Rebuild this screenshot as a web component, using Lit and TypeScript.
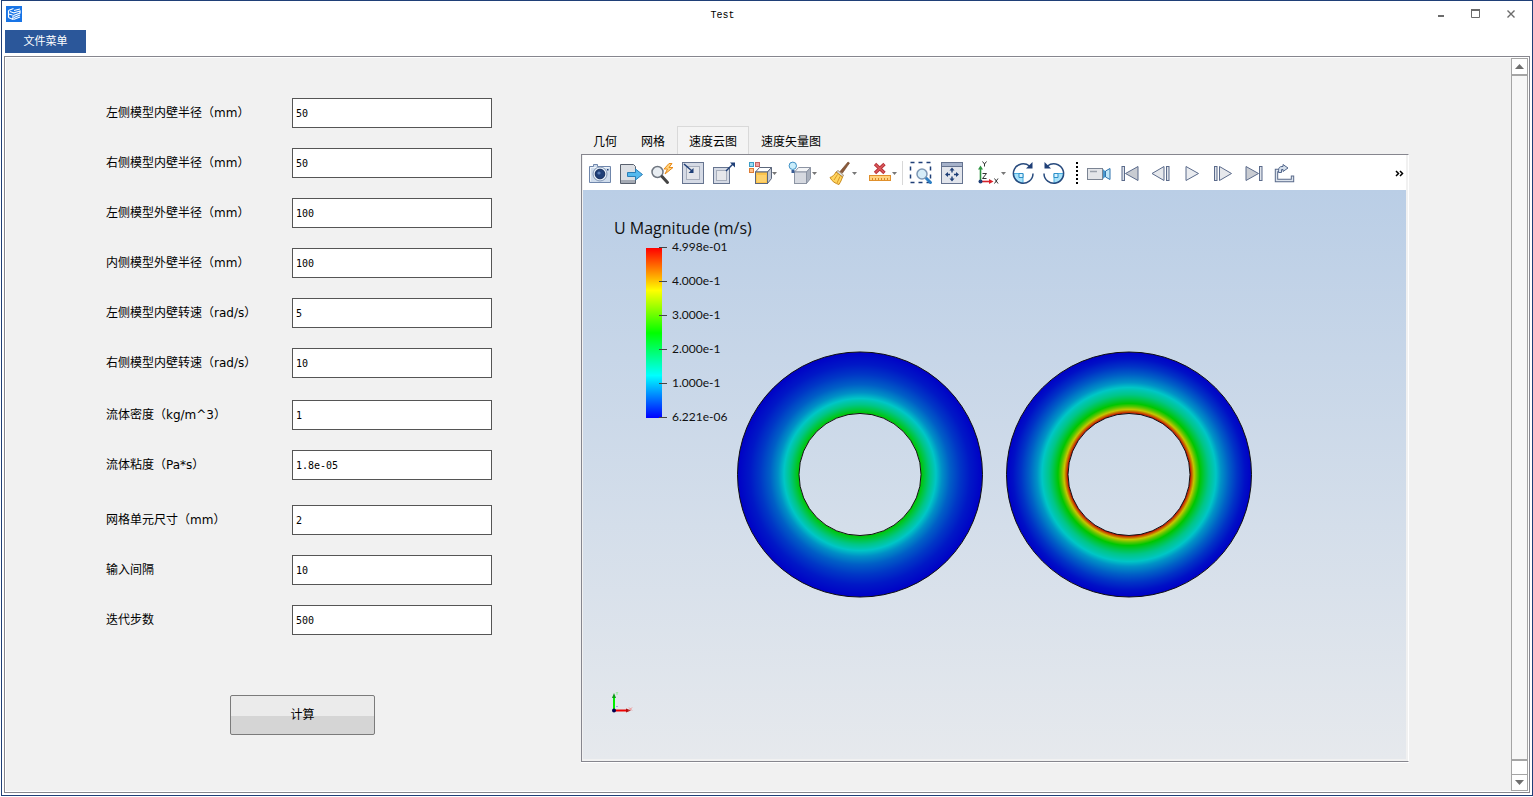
import { LitElement, html, svg, css, TemplateResult, SVGTemplateResult } from "lit";
import { customElement, state } from "lit/decorators.js";
import { classMap } from "lit/directives/class-map.js";

const NAVY = "#1f3f77";

const caret = (x: number) => svg`<path d="M${x} 11h5l-2.500 3z" fill="#777"/>`;

const cube = (front: string, top: string, side: string, line: string) => svg`
  <path d="M5.500 10.500l4-4.500h12l-4 4.500z" fill="${top}" stroke="${line}" stroke-linejoin="round"/>
  <path d="M17.500 10.500l4-4.500v11l-4 5z" fill="${side}" stroke="${line}" stroke-linejoin="round"/>
  <rect x="5.500" y="10.500" width="12" height="11.500" fill="${front}" stroke="${line}"/>`;

const rotateQuarter = svg`
  <path d="M12 12.500v9.500a10 10 0 0 1-9.500-9.500z" fill="#a8e2fa" stroke="#4aaee0"/>
  <path d="M12 12.500h-4v4h4z" fill="#d8f3ff" stroke="#2d8fc8"/>`;

const icons: Record<string, SVGTemplateResult> = {
  camera: svg`
    <path d="M1.500 5.500h4v-2h4v2h13v16h-21z" fill="#cfdcec" stroke="#6f86ab" stroke-linejoin="round"/>
    <path d="M2.500 20.500v-14h19" fill="none" stroke="#eef4fa"/>
    <circle cx="12" cy="13" r="7" fill="#e4edf6" stroke="#8397b5"/>
    <circle cx="12" cy="13" r="4.800" fill="${NAVY}" stroke="#142c5c"/>
    <circle cx="11" cy="12" r="1.600" fill="#5c7fb8"/>
    <rect x="19" y="8" width="1.500" height="1.500" fill="${NAVY}"/>`,
  exportData: svg`
    <path d="M1.500 3.500h13l2 2v17h-15z" fill="#dcdfe4" stroke="#59616e"/>
    <path d="M2 20.500h14" stroke="#a4aab4" stroke-width="3"/>
    <path d="M8.500 11.500h8v-3.500l7 5.500-7 5.500v-3.500h-8z" fill="#55b9ee" stroke="#2a7fb8" stroke-linejoin="round"/>`,
  zapZoom: svg`
    <circle cx="7.500" cy="11" r="5.500" fill="#e8edf2" stroke="#6f7680" stroke-width="1.500"/>
    <path d="M12 15.500l5.500 6" stroke="#444" stroke-width="3" stroke-linecap="round"/>
    <path d="M19 2.500l-5 5.500h3.500l-2.500 5 8-6.500h-4l3-4z" fill="#ffd27a" stroke="#e88a1a" stroke-linejoin="round"/>`,
  pointIn: svg`
    <rect x="1.500" y="1.500" width="21" height="21" fill="#d5dae5" stroke="#66748f"/>
    <rect x="5.500" y="5.500" width="13" height="13" fill="#e3e5ea" stroke="#a7aebc"/>
    <path d="M3 3l8 7" stroke="${NAVY}" stroke-width="1.500"/>
    <path d="M12.500 12v-5l-5 5z" fill="${NAVY}"/>`,
  pointOut: svg`
    <rect x="1.500" y="6.500" width="16" height="16" fill="#d5dae5" stroke="#66748f"/>
    <rect x="4.500" y="9.500" width="10" height="10" fill="#e6e7eb" stroke="#a7aebc"/>
    <path d="M14 10l7-7" stroke="${NAVY}" stroke-width="1.500"/>
    <path d="M23 1.500v5l-5-5z" fill="${NAVY}"/>`,
  blocks: svg`
    <rect x="1.500" y="1.500" width="4" height="4" fill="#9edcf2" stroke="#3b9cc6"/>
    <rect x="7.500" y="1.500" width="4" height="4" fill="#f0a2a2" stroke="#c66060"/>
    <rect x="1.500" y="7.500" width="4" height="4" fill="#ffc08a" stroke="#dd7c34"/>
    <g transform="translate(2 .500)">${cube("#fcc44c", "#fff", "#c3c9d4", "#5c677c")}</g>
    <rect x="9" y="14" width="9" height="7" fill="#ffdc86" opacity=".6"/>
    ${caret(24)}`,
  lightCube: svg`
    <g transform="translate(1 .500)">${cube("#d6d9e0", "#f3f4f6", "#a9b0bd", "#8c94a3")}</g>
    <circle cx="4.800" cy="4.800" r="3.700" fill="#c9edfb" stroke="#3d8fc4"/>
    <path d="M3.500 9h3v3h-3z" fill="#3a5d94"/>
    ${caret(24)}`,
  broom: svg`
    <path d="M20 1l1.500 1-7 10-2.500-1.500z" fill="#8a5a3a" stroke="#6b4026" stroke-width=".600"/>
    <path d="M10 9.500l5.500 4.500-1 2-6.500-5z" fill="#d8dbe0" stroke="#8e6b3a" stroke-width=".700"/>
    <path d="M8 11l6.500 5c-1 3-2 5-3.500 7.500-3.500-1-7-3-9-7 2.500-.800 4.500-2.500 6-5.500z" fill="#ffd45e" stroke="#c98b1e" stroke-linejoin="round"/>
    <path d="M9.500 13.500l-3.500 5.500M12 15.500l-3 6.500" stroke="#d99a28"/>
    ${caret(24)}`,
  ruler: svg`
    <path d="M7 3l9.500 9M16.500 3l-9.500 9" stroke="#b83238" stroke-width="3.400"/>
    <path d="M7.500 3.500l8.500 8M16 3.500l-8.500 8" stroke="#dc5b5e" stroke-width="1.400"/>
    <rect x="1.500" y="14.500" width="21" height="5" fill="#ffd27e" stroke="#e0902c"/>
    <path d="M4.500 17v2M7.500 17v2M10.500 17v2M13.500 17v2M16.500 17v2M19.500 17v2" stroke="#d98624"/>
    ${caret(24)}`,
  selectZoom: svg`
    <rect x="1.500" y="1.500" width="20" height="20" fill="none" stroke="${NAVY}" stroke-width="1.500" stroke-dasharray="4 4"/>
    <path d="M17 17l4.500 4.500" stroke="#2d7fc4" stroke-width="3" stroke-linecap="round"/>
    <circle cx="13" cy="13" r="5" fill="#d6edf8" stroke="#7d97b4" stroke-width="1.500"/>`,
  fit: svg`
    <rect x="1.500" y="1.500" width="21" height="21" fill="#e2e5ec" stroke="#65738f"/>
    <rect x="2" y="2" width="20" height="3" fill="#a6b2ca"/>
    <path d="M2 5.500h20" stroke="#65738f"/>
    <path d="M12 6.500l2.500 3h-5zM12 20.500l2.500-3h-5zM5 13.500l3-2.500v5zM19 13.500l-3-2.500v5z" fill="${NAVY}"/>
    <path d="M12 9v2.500M12 15.500v2.500M7.500 13.500h2.500M14 13.500h2.500" stroke="${NAVY}" stroke-width="1.400"/>`,
  axes: svg`
    <path d="M9.500 20.500v-13" stroke="#2d9440" stroke-width="1.600"/>
    <path d="M7 8.500l2.500-4 2.500 4z" fill="#2d9440"/>
    <path d="M10 20.500h9" stroke="#d8232c" stroke-width="1.600"/>
    <path d="M18 18l4.500 2.500-4.500 2.500z" fill="#d8232c"/>
    <circle cx="9.500" cy="20.500" r="2" fill="${NAVY}"/>
    <g fill="none" stroke="#333" stroke-width="1">
      <path d="M11.500.500l2 2.500 2-2.500M13.500 3v2.500"/>
      <path d="M11.500 12.500h4l-4 5h4"/>
      <path d="M23.500 17.500l3.500 5M27 17.500l-3.500 5"/>
    </g>
    ${caret(30)}`,
  rotateCw: svg`
    ${rotateQuarter}
    <path d="M18.500 5a9.800 9.800 0 1 0 3.500 7.500" fill="none" stroke="#274a7d" stroke-width="1.500"/>
    <path d="M15 7.500h6.500v-6.500z" fill="${NAVY}"/>`,
  rotateCcw: svg`
    <g transform="translate(24) scale(-1 1)">
      ${rotateQuarter}
      <path d="M18.500 5a9.800 9.800 0 1 0 3.500 7.500" fill="none" stroke="#274a7d" stroke-width="1.500"/>
      <path d="M15 7.500h6.500v-6.500z" fill="${NAVY}"/>
    </g>`,
  video: svg`
    <rect x=".500" y="7.500" width="15" height="11" fill="#e3e5e9" stroke="#7b8493"/>
    <path d="M3 10.500h7" stroke="#9aa1ac" stroke-width="1.500"/>
    <path d="M16 8l3 3v4l-3 3z" fill="#4796cc"/>
    <path d="M18.500 10l4.500-2.500v11l-4.500-2.500z" fill="#bfe6f8" stroke="#2f73ad"/>`,
  first: svg`
    <rect x="4" y="5.500" width="2.500" height="14" fill="#dfe3ea" stroke="#5b6b8b"/>
    <path d="M20 5.500v14l-12.500-7z" fill="#c9ccd2" stroke="#5b6b8b"/>`,
  previous: svg`
    <path d="M15 5.500v14l-12-7z" fill="#e6e8ec" stroke="#5b6b8b"/>
    <rect x="17.500" y="5.500" width="2.500" height="14" fill="#dfe3ea" stroke="#5b6b8b"/>`,
  play: svg`<path d="M6 5.500v14l12.500-7z" fill="#e9ebef" stroke="#5b6b8b"/>`,
  next: svg`
    <rect x="3.500" y="5.500" width="2.500" height="14" fill="#dfe3ea" stroke="#5b6b8b"/>
    <path d="M8.500 5.500v14l12-7z" fill="#e6e8ec" stroke="#5b6b8b"/>`,
  last: svg`
    <path d="M4 5.500v14l12.500-7z" fill="#c9ccd2" stroke="#5b6b8b"/>
    <rect x="17.500" y="5.500" width="2.500" height="14" fill="#dfe3ea" stroke="#5b6b8b"/>`,
  loop: svg`
    <path d="M5.500 9.500h-2v10h16v-5" fill="none" stroke="#5b6b8b" stroke-width="3.400"/>
    <path d="M5.500 9.500h-2v10h16v-4" fill="none" stroke="#dce3ec" stroke-width="1.400"/>
    <path d="M5.500 11.500v-2c0-2.500 1-4 3.500-4h1v-2l5 3.500-5 3.500v-2h-1.500v3z" fill="#d5dfeb" stroke="#53678c" stroke-linejoin="round"/>`,
};

type Tool = { icon: string; label: string; drop?: boolean; apart?: boolean } | "line" | "dots";

const tools: Tool[] = [
  { icon: "camera", label: "截图" },
  { icon: "exportData", label: "导出" },
  { icon: "zapZoom", label: "快速缩放" },
  { icon: "pointIn", label: "缩小到框" },
  { icon: "pointOut", label: "放大到框" },
  { icon: "blocks", label: "显示方式", drop: true, apart: true },
  { icon: "lightCube", label: "光照", drop: true },
  { icon: "broom", label: "清除", drop: true },
  { icon: "ruler", label: "测量", drop: true },
  "line",
  { icon: "selectZoom", label: "框选缩放" },
  { icon: "fit", label: "适应窗口" },
  { icon: "axes", label: "视图方向", drop: true },
  { icon: "rotateCw", label: "顺时针旋转" },
  { icon: "rotateCcw", label: "逆时针旋转" },
  "dots",
  { icon: "video", label: "录制" },
  { icon: "first", label: "第一帧" },
  { icon: "previous", label: "上一帧" },
  { icon: "play", label: "播放" },
  { icon: "next", label: "下一帧" },
  { icon: "last", label: "最后一帧" },
  { icon: "loop", label: "循环" },
];

/* Speed profiles: [radius, fraction of the colour scale]. */
const RADIUS = 122.5;
const HOLE = 61;
type Profile = [number, number][];
const slow: Profile = [[61, 0.5], [65, 0.42], [70, 0.33], [76, 0.25], [82, 0.18], [90, 0.12], [100, 0.07], [110, 0.03], [122.5, 0]];
const fast: Profile = [[61, 1], [63, 0.87], [65, 0.75], [68, 0.61], [71, 0.5], [76, 0.4], [80, 0.33], [87, 0.25], [92, 0.185], [100, 0.12], [108, 0.065], [116, 0.02], [122.5, 0]];

const rainbow = (v: number, level: number) => {
  const f = v * 4;
  const c =
    f < 1 ? [0, f, 1] : f < 2 ? [0, 1, 2 - f] : f < 3 ? [f - 2, 1, 0] : [1, 4 - f, 0];
  return `rgb(${c.map((n) => Math.round(n * level)).join(",")})`;
};

@customElement("flow-view")
export class FlowView extends LitElement {
  static styles = css`
    :host {
      display: block;
      min-height: 0;
      background: linear-gradient(#bacee6, #e6e9ed);
    }
    .scene {
      display: block;
      width: 100%;
      height: 100%;
    }
    .text {
      font-family: Lato, "Open Sans", sans-serif;
      font-size: 12px;
      fill: #111;
    }
    .heading {
      font-family: "Open Sans", sans-serif;
      font-size: 16px;
    }
  `;

  private gradient(id: string, profile: Profile) {
    return svg`<radialGradient id="${id}">
      ${profile.map(([r, v]) => svg`<stop offset="${r / RADIUS}" stop-color="${rainbow(v, 198)}"/>`)}
    </radialGradient>`;
  }

  private ring(cx: number, cy: number, fill: string) {
    const circle = (r: number) =>
      `M${cx - r} ${cy}a${r} ${r} 0 1 0 ${r * 2} 0a${r} ${r} 0 1 0 ${-r * 2} 0z`;
    return svg`<path d="${circle(RADIUS) + circle(HOLE)}" fill="url(#${fill})" fill-rule="evenodd" stroke="#111"/>`;
  }

  render() {
    const ticks = ["4.998e-01", "4.000e-1", "3.000e-1", "2.000e-1", "1.000e-1", "6.221e-06"];
    return html`
      <svg class="scene" viewBox="0 0 823 569" role="img" aria-label="U Magnitude (m/s)">
        <defs>
          ${this.gradient("slow", slow)} ${this.gradient("fast", fast)}
          <linearGradient id="bar" x1="0" y1="0" x2="0" y2="1">
            ${[1, 0.75, 0.5, 0.25, 0].map(
              (v) => svg`<stop offset="${1 - v}" stop-color="${rainbow(v, 255)}"/>`
            )}
          </linearGradient>
        </defs>
        <text class="text heading" x="31" y="44">U Magnitude (m/s)</text>
        <rect x="63" y="58" width="16" height="170" fill="url(#bar)" />
        ${ticks.map(
          (t, i) => svg`
            <path d="M76 ${57.5 + i * 34}h8" stroke="#444"/>
            <text class="text" x="89" y="${61 + i * 34}">${t}</text>`
        )}
        ${this.ring(277, 284.5, "slow")} ${this.ring(546, 284.5, "fast")}
        <path d="M31 520v-13" stroke="#00f000" stroke-width="2" />
        <path d="M29 508l2-5 2 5z" fill="#0b9e14" />
        <path d="M33 502l1 1.500 1-1.500M34 503.500v1.500" fill="none" stroke="#9be8a0" />
        <path d="M32 520.500h12" stroke="#f00000" stroke-width="2" />
        <path d="M43 518.500l5 2-5 2z" fill="#b01010" />
        <path d="M46 517.500l3 3M49 517.500l-3 3" stroke="#f09090" />
        <path d="M33 516.500h2" stroke="#a0a0f0" />
        <circle cx="31" cy="520.500" r="2" fill="#000050" />
      </svg>
    `;
  }
}

interface Field {
  label: string;
  value: string;
}

const groups: Field[][] = [
  [
    { label: "左侧模型内壁半径（mm）", value: "50" },
    { label: "右侧模型内壁半径（mm）", value: "50" },
    { label: "左侧模型外壁半径（mm）", value: "100" },
    { label: "内侧模型外壁半径（mm）", value: "100" },
    { label: "左侧模型内壁转速（rad/s）", value: "5" },
    { label: "右侧模型内壁转速（rad/s）", value: "10" },
  ],
  [
    { label: "流体密度（kg/m^3）", value: "1" },
    { label: "流体粘度（Pa*s）", value: "1.8e-05" },
  ],
  [
    { label: "网格单元尺寸（mm）", value: "2" },
    { label: "输入间隔", value: "10" },
    { label: "迭代步数", value: "500" },
  ],
];

@customElement("app-root")
export class AppRoot extends LitElement {
  static styles = css`
    :host {
      display: block;
      box-sizing: border-box;
      height: 100vh;
      padding: 0 0 1px 1px;
      background: #fff;
      color: #000;
      font: 12px/16px "DejaVu Sans", "Noto Sans CJK SC", sans-serif;
    }
    * {
      box-sizing: border-box;
    }
    button {
      font: inherit;
      color: inherit;
      margin: 0;
      padding: 0;
      border: 0;
      background: none;
    }
    svg {
      display: block;
      overflow: visible;
    }
    .window {
      display: flex;
      flex-direction: column;
      height: 100%;
      border: 1px solid #1f3f77;
      background: #fff;
    }
    .titlebar {
      display: flex;
      align-items: center;
      height: 26px;
      padding: 0 4px;
    }
    .title {
      flex: 1;
      margin: 0;
      padding-top: 4px;
      text-align: center;
      font: 10px/16px "Liberation Mono", monospace;
    }
    .control {
      display: grid;
      place-items: center;
      width: 35px;
      height: 26px;
    }
    .menubar {
      display: flex;
      padding: 3px;
    }
    .menu {
      width: 81px;
      height: 23px;
      background: #2b579a;
      color: #fff;
      font-size: 11px;
    }
    .frame {
      flex: 1;
      display: flex;
      min-height: 0;
      margin: 0 2px 2px;
      padding: 1px;
      border: 1px solid #86868e;
      background: #fff;
    }
    .content {
      flex: 1;
      display: flex;
      min-width: 0;
      padding-left: 100px;
      background: #f1f1f1;
    }
    .form {
      flex: none;
      display: flex;
      flex-direction: column;
      padding-top: 40px;
    }
    .group {
      display: grid;
      gap: 20px;
    }
    .group + .group {
      margin-top: 22px;
    }
    .group + .group + .group {
      margin-top: 25px;
    }
    .row {
      display: grid;
      grid-template-columns: 186px 200px;
      align-items: center;
    }
    .input {
      width: 100%;
      height: 30px;
      margin: 0;
      padding: 0 3px;
      border: 1px solid #555;
      border-radius: 0;
      background: #fff;
      color: #000;
      font: 10px/16px "DejaVu Sans Mono", monospace;
    }
    .calculate {
      width: 145px;
      height: 40px;
      margin: 60px 0 0 124px;
      border: 1px solid #7b7b7b;
      border-radius: 2px;
      background: linear-gradient(#ebebeb 0 52%, #d5d5d5 52%);
    }
    .viewer {
      flex: 1;
      display: flex;
      flex-direction: column;
      min-width: 0;
      margin: 68px 102px 29px 89px;
    }
    .tabs {
      display: flex;
    }
    .tab {
      height: 28px;
      padding: 2px 11px 0;
      border: 1px solid transparent;
      border-bottom: 0;
    }
    .tab.active {
      border-color: #d9d9d9;
      background: #f4f4f4;
    }
    .panel {
      flex: 1;
      display: flex;
      flex-direction: column;
      min-height: 0;
      padding: 0 2px 2px 1px;
      border: 1px solid #86868e;
      border-right-color: #fff;
      box-shadow: 0 1px #fff;
    }
    .toolbar {
      display: flex;
      align-items: center;
      height: 35px;
      padding: 1px 0 0 5px;
      background: #fff;
      overflow: hidden;
    }
    .tool {
      flex: none;
      width: 24px;
      height: 24px;
      margin-right: 7px;
    }
    .tool.drop {
      width: 33px;
    }
    .tool.apart {
      margin-left: 5px;
    }
    .line {
      flex: none;
      width: 1px;
      height: 24px;
      margin: 0 6px 0 -6px;
      background: #d8d8d8;
    }
    .dots {
      flex: none;
      width: 2px;
      height: 22px;
      margin: 0 9px 0 3px;
      background: repeating-linear-gradient(#000 0 2px, transparent 2px 4px);
    }
    .more {
      width: 12px;
      height: 24px;
      margin-left: auto;
    }
    .view {
      flex: 1;
    }
    .scrollbar {
      flex: none;
      display: flex;
      flex-direction: column;
      width: 17px;
      background: #fff;
      border: solid #a5a5a5;
      border-width: 0 1px;
    }
    .arrow {
      display: grid;
      place-items: center;
      height: 17px;
      border: solid #a5a5a5;
      border-width: 1px 0;
    }
    .thumb {
      flex: 1;
      margin-bottom: 13px;
      border-top: 1px solid #a5a5a5;
      border-bottom: 2px solid #a5a5a5;
      background: #f7f7f7;
    }
  `;

  @state() private activeTab = 2;
  private tabNames = ["几何", "网格", "速度云图", "速度矢量图"];

  private tool(t: Tool): TemplateResult {
    if (t === "line" || t === "dots") return html`<span class=${t}></span>`;
    const width = t.drop ? 33 : 24;
    return html`<button class=${classMap({ tool: true, drop: !!t.drop, apart: !!t.apart })} aria-label=${t.label}>
      <svg width=${width} height="24" viewBox="0 0 ${width} 24" fill="none">${icons[t.icon]}</svg>
    </button>`;
  }

  render() {
    let index = 0;
    return html`
      <div class="window">
        <header class="titlebar">
          <svg width="16" height="16" viewBox="0 0 16 16">
            <rect width="16" height="16" fill="#1874e6" />
            <path d="M2.500 4.500l5-2M2.500 4.500v7M2.500 8l4 1M2.500 11.500l4.500 2M4 5.500l4 1.500M7 9.500v4M8 4.500l6-1.500M7.500 7l6.500-2v2l-6.500 2.500M7.500 13.500l6.500-2.500M8 11.500l6-2.500" fill="none" stroke="#fff" stroke-width="1.200" />
          </svg>
          <h1 class="title">Test</h1>
          <button class="control" aria-label="最小化">
            <svg width="10" height="10" viewBox="0 0 10 10"><path d="M2 6h6v2h-6z" fill="#6b6b6b" /></svg>
          </button>
          <button class="control" aria-label="最大化">
            <svg width="10" height="10" viewBox="0 0 10 10">
              <path d="M.500 1v7.500h8v-7.500" fill="none" stroke="#6b6b6b" /><path d="M0 1h9" stroke="#6b6b6b" stroke-width="2" />
            </svg>
          </button>
          <button class="control" aria-label="关闭">
            <svg width="10" height="10" viewBox="0 0 10 10">
              <path d="M1.500 1.500l7 7M8.500 1.500l-7 7" stroke="#6b6b6b" stroke-width="1.400" />
            </svg>
          </button>
        </header>
        <nav class="menubar"><button class="menu">文件菜单</button></nav>
        <main class="frame">
          <div class="content">
            <form class="form" @submit=${(e: Event) => e.preventDefault()}>
              ${groups.map(
                (group) => html`<div class="group">
                  ${group.map((field) => {
                    const id = `field-${index++}`;
                    return html`<div class="row">
                      <label for=${id}>${field.label}</label>
                      <input class="input" id=${id} type="text" .value=${field.value} />
                    </div>`;
                  })}
                </div>`
              )}
              <button class="calculate" type="submit">计算</button>
            </form>
            <section class="viewer">
              <div class="tabs" role="tablist">
                ${this.tabNames.map(
                  (name, i) => html`<button
                    class=${classMap({ tab: true, active: i === this.activeTab })}
                    role="tab"
                    aria-selected=${i === this.activeTab}
                    @click=${() => (this.activeTab = i)}
                  >${name}</button>`
                )}
              </div>
              <div class="panel">
                <div class="toolbar">
                  ${tools.map((t) => this.tool(t))}
                  <button class="more" aria-label="更多">
                    <svg width="12" height="24" viewBox="0 0 12 24">
                      <path d="M2 10l2.500 2.500-2.500 2.500M6 10l2.500 2.500-2.500 2.500" fill="none" stroke="#000" stroke-width="1.500" />
                    </svg>
                  </button>
                </div>
                <flow-view class="view"></flow-view>
              </div>
            </section>
          </div>
          <div class="scrollbar">
            <button class="arrow" aria-label="向上滚动">
              <svg width="9" height="5" viewBox="0 0 9 5"><path d="M0 5h9l-4.500-5z" fill="#6f6f6f" /></svg>
            </button>
            <div class="thumb"></div>
            <button class="arrow" aria-label="向下滚动">
              <svg width="9" height="5" viewBox="0 0 9 5"><path d="M0 0h9l-4.500 5z" fill="#6f6f6f" /></svg>
            </button>
          </div>
        </main>
      </div>
    `;
  }
}
